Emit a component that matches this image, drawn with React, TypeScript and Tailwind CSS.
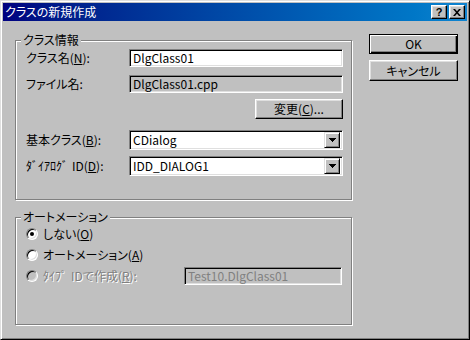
import React from "react";

const raised =
  "border border-t-white border-l-white border-r-black border-b-black shadow-[inset_-1px_-1px_0_#808080,inset_1px_1px_0_#dfdfdf] bg-[#c0c0c0]";
const sunken =
  "border border-t-[#808080] border-l-[#808080] border-r-white border-b-white shadow-[inset_1px_1px_0_#000,inset_-1px_-1px_0_#dfdfdf]";

function U({ children }: { children: React.ReactNode }) {
  return <span className="underline underline-offset-[1px] decoration-1">{children}</span>;
}

function Edit({ text, gray, width }: { text: string; gray?: boolean; width: string }) {
  return (
    <div className={`${sunken} ${width} h-[18px] flex items-center pl-[3px] ${gray ? "bg-[#c0c0c0]" : "bg-white"}`}>
      <span className="leading-[14px] text-black">{text}</span>
    </div>
  );
}

function Combo({ text }: { text: string }) {
  return (
    <div className={`${sunken} w-[214px] h-[20px] bg-white flex items-center pl-[3px] pr-[2px]`}>
      <span className="flex-1 leading-[14px] text-black">{text}</span>
      <div className="w-[16px] h-[16px] border border-t-[#dfdfdf] border-l-[#dfdfdf] border-r-black border-b-black shadow-[inset_1px_1px_0_#fff,inset_-1px_-1px_0_#808080] bg-[#c0c0c0] flex items-center justify-center">
        <svg width="7" height="4" viewBox="0 0 7 4">
          <path d="M0 0h7v1h-1v1h-1v1h-1v1h-1v-1h-1v-1h-1v-1h-1z" fill="#000" />
        </svg>
      </div>
    </div>
  );
}

function Group({ label, className, children }: { label: string; className: string; children: React.ReactNode }) {
  return (
    <div className={`relative border border-[#808080] shadow-[inset_1px_1px_0_#fff,1px_1px_0_#fff] ${className}`}>
      <span className="absolute left-[5px] -top-[8px] bg-[#c0c0c0] px-[2px] leading-[14px] text-black">{label}</span>
      {children}
    </div>
  );
}

function Radio({ checked, disabled }: { checked?: boolean; disabled?: boolean }) {
  return (
    <div
      className={`w-[12px] h-[12px] rounded-full border border-t-[#808080] border-l-[#808080] border-r-white border-b-white shadow-[inset_1px_1px_0_#000,inset_-1px_-1px_0_#dfdfdf] flex items-center justify-center ${
        disabled ? "bg-[#c0c0c0]" : "bg-white"
      }`}
    >
      {checked && <div className="w-[4px] h-[4px] rounded-full bg-black" />}
    </div>
  );
}

export default function App() {
  return (
    <div className="w-[470px] h-[340px] bg-[#c0c0c0] border border-t-[#dfdfdf] border-l-[#dfdfdf] border-r-black border-b-black shadow-[inset_1px_1px_0_#fff,inset_-1px_-1px_0_#808080] p-[2px] flex flex-col text-[12px] text-black font-['Noto_Sans_CJK_JP',sans-serif] [font-feature-settings:'palt']">
      {/* title bar */}
      <div className="h-[18px] flex items-center bg-linear-to-r from-[#000080] to-[#1084d0] pl-[2px] pr-[2px]">
        <span className="flex-1 text-white font-normal leading-[14px]">クラスの新規作成</span>
        <div className={`${raised} w-[16px] h-[14px] flex items-center justify-center`}>
          <span className="font-bold text-[11px] leading-[10px] font-['Liberation_Sans',sans-serif]">?</span>
        </div>
        <div className={`${raised} ml-[2px] w-[16px] h-[14px] flex items-center justify-center`}>
          <svg width="8" height="7" viewBox="0 0 8 7">
            <path d="M0 0h2l2 2.2L6 0h2L5 3.5 8 7H6L4 4.8 2 7H0l3-3.5z" fill="#000" />
          </svg>
        </div>
      </div>

      {/* body */}
      <div className="flex flex-1 pl-[12px]">
        <div className="flex flex-col w-[337px] mt-[19px]">
          <Group label="クラス情報" className="h-[160px] pl-[10px] pr-[8px] flex flex-col">
            <div className="mt-[8px] h-[18px] flex items-center">
              <span className="w-[103px] leading-[14px]">
                クラス名(<U>N</U>):
              </span>
              <Edit text="DlgClass01" width="w-[214px]" />
            </div>
            <div className="mt-[8px] h-[18px] flex items-center">
              <span className="w-[103px] leading-[14px]">ファイル名:</span>
              <Edit text="DlgClass01.cpp" gray width="w-[214px]" />
            </div>
            <div className="mt-[6px] h-[20px] flex justify-end">
              <div className={`${raised} w-[88px] h-[20px] flex items-center justify-center`}>
                <span className="leading-[14px]">
                  変更(<U>C</U>)...
                </span>
              </div>
            </div>
            <div className="mt-[11px] h-[20px] flex items-center">
              <span className="w-[103px] leading-[14px]">
                基本クラス(<U>B</U>):
              </span>
              <Combo text="CDialog" />
            </div>
            <div className="mt-[6px] h-[20px] flex items-center">
              <span className="w-[103px] leading-[14px]">
                ﾀﾞｲｱﾛｸﾞ<span className="ml-[4px]">ID(<U>D</U>):</span>
              </span>
              <Combo text="IDD_DIALOG1" />
            </div>
          </Group>

          <Group label="オートメーション" className="mt-[17px] h-[108px] pl-[10px] pr-[9px] flex flex-col">
            <div className="mt-[8px] h-[16px] flex items-center gap-[5px]">
              <Radio checked />
              <span className="leading-[14px]">
                しない(<U>O</U>)
              </span>
            </div>
            <div className="mt-[5px] h-[16px] flex items-center gap-[5px]">
              <Radio />
              <span className="leading-[14px]">
                オートメーション(<U>A</U>)
              </span>
            </div>
            <div className="mt-[4px] h-[18px] flex items-center">
              <div className="w-[158px] flex items-center gap-[5px]">
                <Radio disabled />
                <span className="leading-[14px] text-[#808080] [text-shadow:1px_1px_0_#fff]">
                  ﾀｲﾌﾟ<span className="ml-[4px]">IDで作成(<U>R</U>):</span>
                </span>
              </div>
              <div className={`${sunken} w-[158px] h-[18px] bg-[#c0c0c0] flex items-center pl-[3px]`}>
                <span className="leading-[14px] text-[#808080]">Test10.DlgClass01</span>
              </div>
            </div>
          </Group>
        </div>

        <div className="ml-[17px] mt-[13px] flex flex-col w-[89px]">
          <div className="h-[20px] border border-black shadow-[inset_1px_1px_0_#fff,inset_-1px_-1px_0_#000,inset_-2px_-2px_0_#808080] flex items-center justify-center">
            <span className="leading-[14px]">OK</span>
          </div>
          <div className={`${raised} mt-[6px] h-[21px] flex items-center justify-center`}>
            <span className="leading-[14px]">キャンセル</span>
          </div>
        </div>
      </div>
    </div>
  );
}
